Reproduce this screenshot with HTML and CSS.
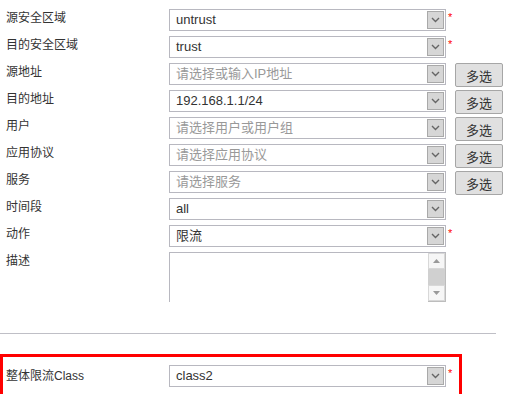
FILE: index.html
```html
<!DOCTYPE html>
<html>
<head>
  <title>流量策略</title>
  <link rel="stylesheet" href="styles.css">
</head>
<body>
  <div class="form">
    <div class="row">
      <span class="label">源安全区域</span>
      <div class="select"><span class="value">untrust</span><span class="arrow"><svg width="9" height="6" viewBox="0 0 9 6"><polyline points="1,1 4.5,4.5 8,1" fill="none" stroke="#666" stroke-width="1.4"/></svg></span></div>
      <span class="req">*</span>
    </div>
    <div class="row">
      <span class="label">目的安全区域</span>
      <div class="select"><span class="value">trust</span><span class="arrow"><svg width="9" height="6" viewBox="0 0 9 6"><polyline points="1,1 4.5,4.5 8,1" fill="none" stroke="#666" stroke-width="1.4"/></svg></span></div>
      <span class="req">*</span>
    </div>
    <div class="row">
      <span class="label">源地址</span>
      <div class="select"><span class="value placeholder">请选择或输入IP地址</span><span class="arrow"><svg width="9" height="6" viewBox="0 0 9 6"><polyline points="1,1 4.5,4.5 8,1" fill="none" stroke="#666" stroke-width="1.4"/></svg></span></div>
      <button class="multi">多选</button>
    </div>
    <div class="row">
      <span class="label">目的地址</span>
      <div class="select"><span class="value">192.168.1.1/24</span><span class="arrow"><svg width="9" height="6" viewBox="0 0 9 6"><polyline points="1,1 4.5,4.5 8,1" fill="none" stroke="#666" stroke-width="1.4"/></svg></span></div>
      <button class="multi">多选</button>
    </div>
    <div class="row">
      <span class="label">用户</span>
      <div class="select"><span class="value placeholder">请选择用户或用户组</span><span class="arrow"><svg width="9" height="6" viewBox="0 0 9 6"><polyline points="1,1 4.5,4.5 8,1" fill="none" stroke="#666" stroke-width="1.4"/></svg></span></div>
      <button class="multi">多选</button>
    </div>
    <div class="row">
      <span class="label">应用协议</span>
      <div class="select"><span class="value placeholder">请选择应用协议</span><span class="arrow"><svg width="9" height="6" viewBox="0 0 9 6"><polyline points="1,1 4.5,4.5 8,1" fill="none" stroke="#666" stroke-width="1.4"/></svg></span></div>
      <button class="multi">多选</button>
    </div>
    <div class="row">
      <span class="label">服务</span>
      <div class="select"><span class="value placeholder">请选择服务</span><span class="arrow"><svg width="9" height="6" viewBox="0 0 9 6"><polyline points="1,1 4.5,4.5 8,1" fill="none" stroke="#666" stroke-width="1.4"/></svg></span></div>
      <button class="multi">多选</button>
    </div>
    <div class="row">
      <span class="label">时间段</span>
      <div class="select"><span class="value">all</span><span class="arrow"><svg width="9" height="6" viewBox="0 0 9 6"><polyline points="1,1 4.5,4.5 8,1" fill="none" stroke="#666" stroke-width="1.4"/></svg></span></div>
    </div>
    <div class="row">
      <span class="label">动作</span>
      <div class="select"><span class="value">限流</span><span class="arrow"><svg width="9" height="6" viewBox="0 0 9 6"><polyline points="1,1 4.5,4.5 8,1" fill="none" stroke="#666" stroke-width="1.4"/></svg></span></div>
      <span class="req">*</span>
    </div>
    <div class="row row-text">
      <span class="label">描述</span>
      <div class="textarea">
        <div class="text-body"></div>
        <div class="scrollbar">
          <span class="scroll-btn"><svg width="7" height="4" viewBox="0 0 7 4"><polygon points="0,4 3.5,0 7,4" fill="#999"/></svg></span>
          <span class="scroll-track"></span>
          <span class="scroll-btn"><svg width="7" height="4" viewBox="0 0 7 4"><polygon points="0,0 3.5,4 7,0" fill="#999"/></svg></span>
        </div>
      </div>
    </div>
  </div>

  <div class="divider"></div>

  <div class="highlight">
    <div class="row row-center">
      <span class="label">整体限流Class</span>
      <div class="select"><span class="value">class2</span><span class="arrow"><svg width="9" height="6" viewBox="0 0 9 6"><polyline points="1,1 4.5,4.5 8,1" fill="none" stroke="#666" stroke-width="1.4"/></svg></span></div>
      <span class="req">*</span>
    </div>
  </div>
</body>
</html>
```

FILE: styles.css
```css
body {
  margin: 0;
  font-family: "Liberation Sans", "Noto Sans CJK SC", sans-serif;
  color: #333;
  background: #fff;
}

.form {
  padding-top: 9px;
}

.row {
  display: flex;
  align-items: flex-start;
  height: 27px;
}

.label {
  width: 163px;
  padding-left: 6px;
  font-size: 12px;
  line-height: 18px;
}

.select {
  display: flex;
  align-items: center;
  box-sizing: border-box;
  width: 277px;
  height: 22px;
  border: 1px solid #b8b8c0;
  background: #fff;
}

.value {
  flex: 1;
  padding-left: 6px;
  font-size: 13px;
  line-height: 20px;
  color: #333;
  white-space: nowrap;
  overflow: hidden;
}

.placeholder {
  color: #999;
}

.arrow {
  display: flex;
  align-items: center;
  justify-content: center;
  box-sizing: border-box;
  width: 17px;
  height: 18px;
  margin-right: 1px;
  border: 1px solid #a9a9a9;
  background: #d6d6d6;
}

.req {
  margin-left: 2px;
  margin-top: 3px;
  font-size: 11px;
  line-height: 11px;
  color: #f00;
}

.multi {
  box-sizing: border-box;
  width: 48px;
  height: 24px;
  margin-left: 9px;
  padding: 0;
  border: 1px solid #a6a6a6;
  border-radius: 2px;
  background: #e0e0e0;
  font-family: "Liberation Sans", "Noto Sans CJK SC", sans-serif;
  font-size: 13px;
  color: #333;
}

.row-text {
  height: 50px;
}

.textarea {
  display: flex;
  box-sizing: border-box;
  width: 277px;
  height: 50px;
  border: 1px solid #b8b8c0;
  border-right: none;
  border-bottom: none;
}

.text-body {
  flex: 1;
}

.scrollbar {
  display: flex;
  flex-direction: column;
  width: 18px;
  background: #bdbdbd;
  padding: 0 1px 1px 0;
  box-sizing: border-box;
}

.scroll-btn {
  display: flex;
  align-items: center;
  justify-content: center;
  box-sizing: border-box;
  height: 16px;
  border: 1px solid #d8d8d8;
  background: #f6f6f6;
}

.scroll-track {
  flex: 1;
  background: #d0d0d0;
}

.divider {
  width: 496px;
  height: 1px;
  margin-top: 31px;
  background: #bfbfc6;
}

.highlight {
  box-sizing: border-box;
  width: 462px;
  margin-top: 20px;
  padding: 8px 3px;
  border: 3px solid #f00;
}

.highlight .label {
  width: 163px;
  padding-left: 0;
}

.row-center {
  align-items: center;
  height: 22px;
}

.row-center .req {
  align-self: flex-start;
}
```
